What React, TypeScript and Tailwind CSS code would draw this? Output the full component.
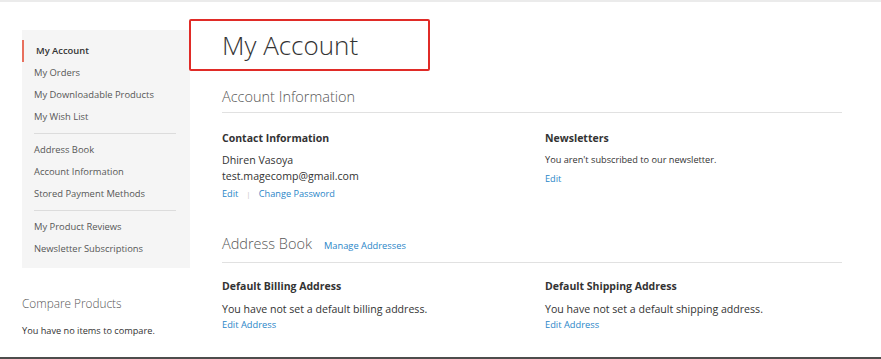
import React from 'react';

const navGroups = [
  ['My Account', 'My Orders', 'My Downloadable Products', 'My Wish List'],
  ['Address Book', 'Account Information', 'Stored Payment Methods'],
  ['My Product Reviews', 'Newsletter Subscriptions'],
];

function Sidebar() {
  return (
    <div className="w-[168px] shrink-0 ml-[22px] mt-[28px]">
      <div className="bg-[#f5f5f5] pt-[10px] pb-[8px]">
        {navGroups.map((group, gi) => (
          <div key={gi}>
            {gi > 0 && <div className="ml-[12px] mr-[14px] my-[5px] border-t border-[#dcdcdc]" />}
            {group.map((item) => {
              const active = item === 'My Account';
              return (
                <div
                  key={item}
                  className={`h-[22px] flex items-center pl-[12px] text-[9.4px] ${
                    active ? 'border-l-[2px] border-[#e8705e] pl-[9px] font-semibold text-[#333]' : 'text-[#575757]'
                  }`}
                >
                  {item}
                </div>
              );
            })}
          </div>
        ))}
      </div>
      <div className="mt-[25px] text-[11.8px] font-light text-[#575757] leading-[20px]">Compare Products</div>
      <div className="mt-[10px] text-[9.2px] text-[#333] leading-[16px]">You have no items to compare.</div>
    </div>
  );
}

function SectionTitle({ title, link, pad }: { title: string; link?: string; pad: string }) {
  return (
    <div className={`flex items-baseline gap-[12px] border-b border-[#e1e1e1] mr-[39px] ml-[32px] ${pad}`}>
      <span className="text-[14.5px] font-light text-[#575757] leading-[20px]">{title}</span>
      {link && <span className="text-[9.3px] text-[#2a86c8]">{link}</span>}
    </div>
  );
}

function Block({ heading, children }: { heading: string; children: React.ReactNode }) {
  return (
    <div>
      <div className="text-[10.5px] font-bold text-[#333] leading-[16px]">{heading}</div>
      {children}
    </div>
  );
}

export default function App() {
  return (
    <div className="w-[881px] h-[359px] bg-white overflow-hidden font-['Open_Sans',sans-serif] border-t-[2px] border-[#ebebeb] flex flex-col">
      <div className="flex flex-1">
        <Sidebar />
        <div className="flex-1 min-w-0 flex flex-col">
          <div className="mt-[17px] w-[241px] h-[52px] border-[2px] border-[#e02b27] rounded-[2px] flex items-center pl-[31px] -ml-[1px]">
            <span className="text-[26px] font-light text-[#333] leading-none">My Account</span>
          </div>

          <div className="mt-[16px]">
            <SectionTitle title="Account Information" pad="pb-[5px]" />
          </div>
          <div className="ml-[32px] mt-[17px] grid grid-cols-[323px_1fr]">
            <Block heading="Contact Information">
              <div className="mt-[6px] text-[10.6px] text-[#333] leading-[16px]">Dhiren Vasoya</div>
              <div className="text-[10.6px] text-[#333] leading-[16px]">test.magecomp@gmail.com</div>
              <div className="mt-[2px] text-[9.2px] text-[#2a86c8] leading-[16px] flex items-center">
                <span>Edit</span>
                <span className="mx-[8px] text-[#c8c8c8] text-[8px]">|</span>
                <span>Change Password</span>
              </div>
            </Block>
            <Block heading="Newsletters">
              <div className="mt-[7px] text-[9.2px] text-[#333] leading-[14px]">You aren't subscribed to our newsletter.</div>
              <div className="mt-[5px] text-[9.2px] text-[#2a86c8] leading-[14px]">Edit</div>
            </Block>
          </div>

          <div className="mt-[32px]">
            <SectionTitle title="Address Book" link="Manage Addresses" pad="pb-[8px]" />
          </div>
          <div className="ml-[32px] mt-[15px] grid grid-cols-[323px_1fr]">
            <Block heading="Default Billing Address">
              <div className="mt-[7px] text-[10.6px] text-[#333] leading-[16px]">You have not set a default billing address.</div>
              <div className="text-[9.3px] text-[#2a86c8] leading-[16px]">Edit Address</div>
            </Block>
            <Block heading="Default Shipping Address">
              <div className="mt-[7px] text-[10.6px] text-[#333] leading-[16px]">You have not set a default shipping address.</div>
              <div className="text-[9.3px] text-[#2a86c8] leading-[16px]">Edit Address</div>
            </Block>
          </div>
        </div>
      </div>
      <div className="h-[2px] bg-[#4d4d4d]" />
    </div>
  );
}
